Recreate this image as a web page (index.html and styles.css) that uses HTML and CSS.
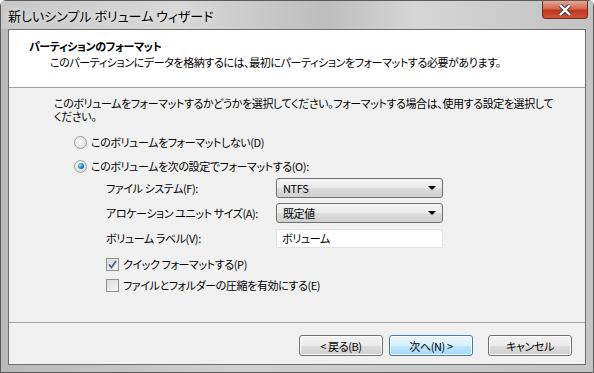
FILE: index.html
```html
<!DOCTYPE html>
<html lang="ja">

<head>
    <meta charset="UTF-8">
    <title>新しいシンプル ボリューム ウィザード</title>
    <link rel="stylesheet" href="styles.css">
</head>

<body>
    <div class="window">
        <div class="titlebar">
            <span class="title">新しいシンプル ボリューム ウィザード</span>
            <span class="close-btn">
                <svg width="16" height="12" viewBox="0 0 16 12">
                    <path d="M3 1 L13 11 M13 1 L3 11" stroke="#3a3a3a" stroke-width="4" />
                    <path d="M3 1 L13 11 M13 1 L3 11" stroke="#ffffff" stroke-width="2.4" />
                </svg>
            </span>
        </div>

        <div class="client">
            <div class="header">
                <div class="header-title">パーティションのフォーマット</div>
                <div class="header-sub">このパーティションにデータを格納するには、最初にパーティションをフォーマットする必要があります。</div>
            </div>

            <div class="content">
                <p class="intro">このボリュームをフォーマットするかどうかを選択してください。フォーマットする場合は、使用する設定を選択して<br>ください。</p>

                <div class="radio-row first">
                    <span class="radio"></span>
                    <span>このボリュームをフォーマットしない(D)</span>
                </div>
                <div class="radio-row">
                    <span class="radio checked"></span>
                    <span>このボリュームを次の設定でフォーマットする(O):</span>
                </div>

                <div class="settings">
                    <label>ファイル システム(F):</label>
                    <div class="combo"><span>NTFS</span><span class="arrow"></span></div>

                    <label>アロケーション ユニット サイズ(A):</label>
                    <div class="combo"><span>既定値</span><span class="arrow"></span></div>

                    <label>ボリューム ラベル(V):</label>
                    <div class="textbox">ボリューム</div>
                </div>

                <div class="checks">
                    <div class="check-row">
                        <span class="checkbox checked">
                            <svg width="9" height="9" viewBox="0 0 9 9">
                                <path d="M1 4.5 L3.5 7.5 L8 1" fill="none" stroke="#4a5f97" stroke-width="1.8" />
                            </svg>
                        </span>
                        <span>クイック フォーマットする(P)</span>
                    </div>
                    <div class="check-row">
                        <span class="checkbox"></span>
                        <span>ファイルとフォルダーの圧縮を有効にする(E)</span>
                    </div>
                </div>
            </div>

            <div class="footer">
                <button class="btn">&lt; 戻る(B)</button>
                <button class="btn default">次へ(N) &gt;</button>
                <button class="btn cancel">キャンセル</button>
            </div>
        </div>
    </div>
</body>

</html>
```

FILE: styles.css
```css
body {
    margin: 0;
    width: 594px;
    height: 373px;
    overflow: hidden;
    font-family: "Noto Sans CJK JP", "Noto Sans", sans-serif;
    font-size: 11px;
    letter-spacing: -0.4px;
    font-feature-settings: "palt";
    color: #000;
}

.window {
    width: 594px;
    height: 373px;
    box-sizing: border-box;
    display: flex;
    flex-direction: column;
    background: linear-gradient(90deg, #b9b9b9 0%, #d0d0d0 40%, #c4c4c4 100%);
    border: 1px solid #5a5a5a;
    border-radius: 6px 6px 0 0;
}

.titlebar {
    height: 28px;
    display: flex;
    align-items: flex-start;
    background: linear-gradient(90deg, #c8c8c8 0%, #d8d8d8 30%, #bdbdbd 55%, #d6d6d6 70%, #c2c2c2 100%);
}

.title {
    margin: 5px 0 0 7px;
    font-size: 13px;
    letter-spacing: 0;
    color: #000;
    text-shadow: 0 0 6px rgba(255, 255, 255, 0.9);
}

.close-btn {
    margin-left: auto;
    margin-right: 5px;
    width: 46px;
    height: 18px;
    box-sizing: border-box;
    display: flex;
    justify-content: center;
    align-items: center;
    border: 1px solid #6b2a22;
    border-top: none;
    border-radius: 0 0 4px 4px;
    background: linear-gradient(180deg, #e8a896 0%, #d4664e 45%, #c0361f 55%, #d1553a 100%);
}

.client {
    flex: 1;
    margin: 0 7px 7px 7px;
    display: flex;
    flex-direction: column;
    border: 1px solid #6e6e6e;
    background: #f0f0f0;
}

.header {
    height: 58px;
    background: #fff;
    border-bottom: 1px solid #a0a0a0;
    box-sizing: border-box;
    padding: 8px 0 0 20px;
    white-space: nowrap;
}

.header-title {
    font-weight: bold;
    line-height: 16px;
}

.header-sub {
    margin-left: 21px;
    line-height: 16px;
}

.content {
    height: 235px;
    box-sizing: border-box;
    padding: 9px 20px 0 45px;
    border-bottom: 1px solid #a0a0a0;
}

.intro {
    margin: 0;
    line-height: 13px;
    white-space: nowrap;
}

.radio-row,
.check-row {
    display: flex;
    align-items: center;
    gap: 4px;
    height: 16px;
}

.radio-row {
    margin-left: 20px;
    margin-top: 8px;
}

.radio-row.first {
    margin-top: 11px;
}

.radio {
    width: 11px;
    height: 11px;
    border-radius: 50%;
    border: 1px solid #9c9c9c;
    background: radial-gradient(circle at 40% 35%, #ffffff 0%, #e6e6e6 60%, #d4d4d4 100%);
    display: flex;
    justify-content: center;
    align-items: center;
}

.radio.checked::after {
    content: "";
    width: 6px;
    height: 6px;
    border-radius: 50%;
    background: radial-gradient(circle at 35% 35%, #9fe0ff 0%, #1e78c9 55%, #0c4f96 100%);
}

.settings {
    display: grid;
    grid-template-columns: 170px 167px;
    grid-auto-rows: 20px;
    row-gap: 5px;
    align-items: center;
    margin: 4px 0 0 52px;
}

.settings label {
    white-space: nowrap;
}

.combo {
    height: 20px;
    box-sizing: border-box;
    display: flex;
    align-items: center;
    padding: 0 6px;
    border: 1px solid #707070;
    border-radius: 3px;
    background: linear-gradient(180deg, #f4f4f4 0%, #eaeaea 50%, #dcdcdc 52%, #cfcfcf 100%);
}

.arrow {
    margin-left: auto;
    width: 0;
    height: 0;
    border-left: 4px solid transparent;
    border-right: 4px solid transparent;
    border-top: 4px solid #000;
}

.textbox {
    height: 19px;
    box-sizing: border-box;
    padding: 0 5px;
    line-height: 17px;
    background: #fff;
    border: 1px solid #e0e0e0;
}

.checks {
    margin: 8px 0 0 52px;
    display: flex;
    flex-direction: column;
    gap: 5px;
}

.checkbox {
    width: 11px;
    height: 11px;
    border: 1px solid #8e8f8f;
    background: linear-gradient(135deg, #dcdcdc 0%, #f6f6f6 100%);
    display: flex;
    justify-content: center;
    align-items: center;
}

.footer {
    flex: 1;
    display: flex;
    align-items: flex-start;
    justify-content: flex-end;
    padding: 12px 13px 0 0;
    gap: 6px;
}

.btn {
    width: 84px;
    height: 21px;
    font-family: inherit;
    font-size: 11px;
    letter-spacing: -0.4px;
    font-feature-settings: "palt";
    padding: 0;
    border: 1px solid #707070;
    border-radius: 3px;
    background: linear-gradient(180deg, #f2f2f2 0%, #ebebeb 50%, #dddddd 51%, #cfcfcf 100%);
    box-shadow: inset 0 0 0 1px #fcfcfc;
}

.btn.default {
    border-color: #3c7fb1;
    background: linear-gradient(180deg, #eaf6fd 0%, #d9f0fc 50%, #bee6fd 51%, #a7d9f5 100%);
}

.btn.cancel {
    margin-left: 9px;
}
```
